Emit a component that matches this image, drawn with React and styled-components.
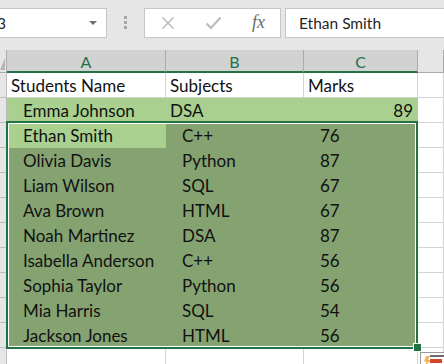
import React from "react";
import styled, { createGlobalStyle } from "styled-components";

const GlobalStyle = createGlobalStyle`
    html, body {
        margin: 0;
        padding: 0;
        background: #ffffff;
        overflow: hidden;
    }
    body {
        font-family: Lato, "Open Sans", sans-serif;
    }
`

const LIGHT = "#a9d08e";
const DARK = "#85a371";

const rows = [
    { name: "Emma Johnson", subject: "DSA", marks: 89, kind: "highlight" },
    { name: "Ethan Smith", subject: "C++", marks: 76, kind: "active" },
    { name: "Olivia Davis", subject: "Python", marks: 87 },
    { name: "Liam Wilson", subject: "SQL", marks: 67 },
    { name: "Ava Brown", subject: "HTML", marks: 67 },
    { name: "Noah Martinez", subject: "DSA", marks: 87 },
    { name: "Isabella Anderson", subject: "C++", marks: 56 },
    { name: "Sophia Taylor", subject: "Python", marks: 56 },
    { name: "Mia Harris", subject: "SQL", marks: 54 },
    { name: "Jackson Jones", subject: "HTML", marks: 56 },
];

const CrossIcon = () => (
    <svg width="14" height="14" viewBox="0 0 14 14">
        <path d="M1.5 1.5 L12.5 12.5 M12.5 1.5 L1.5 12.5" stroke="#bcbcbc" strokeWidth="1.6" fill="none" />
    </svg>
)

const CheckIcon = () => (
    <svg width="17" height="14" viewBox="0 0 17 14">
        <path d="M1.5 7.5 L6 12 L15.5 1.5" stroke="#bcbcbc" strokeWidth="2.2" fill="none" />
    </svg>
)

const QuickIcon = () => (
    <svg width="26" height="16" viewBox="0 0 26 16">
        <rect x="0.5" y="0.5" width="30" height="20" fill="#ffffff" stroke="#9a9a9a" />
        <path d="M6 4 L10 4 L8 8 L11 8 L5 14 L6.5 9.5 L4 9.5 Z" fill="#f0b060" />
        <rect x="10" y="7" width="12" height="4" fill="#d24726" />
        <rect x="10" y="3" width="14" height="2" fill="#6d6d6d" />
    </svg>
)

const App = () => {
    return (
        <Window>
            <GlobalStyle />
            <FormulaBar>
                <NameBox>
                    <NameText>A3</NameText>
                    <DropArrow />
                </NameBox>
                <Grip>
                    <Dot />
                    <Dot />
                    <Dot />
                </Grip>
                <ActionBox>
                    <ActionSlot><CrossIcon /></ActionSlot>
                    <ActionSlot><CheckIcon /></ActionSlot>
                    <FxLabel>fx</FxLabel>
                </ActionBox>
                <FormulaInput>Ethan Smith</FormulaInput>
            </FormulaBar>

            <Sheet>
                <Grid>
                    <Corner><CornerMark /></Corner>
                    <ColHeader $selected>A</ColHeader>
                    <ColHeader $selected>B</ColHeader>
                    <ColHeader $selected>C</ColHeader>
                    <ColHeader />

                    <RowHead />
                    <Cell>Students Name</Cell>
                    <Cell>Subjects</Cell>
                    <Cell>Marks</Cell>
                    <Cell />

                    {rows.map((r) => {
                        const fill = r.kind === "highlight" ? LIGHT : DARK;
                        const nameFill = r.kind ? LIGHT : DARK;
                        const indent = r.kind !== "highlight";
                        return (
                            <React.Fragment key={r.name}>
                                <RowHead />
                                <Cell $fill={nameFill} $indent>{r.name}</Cell>
                                <Cell $fill={fill} $indent={indent}>{r.subject}</Cell>
                                <Cell $fill={fill} $indent={indent} $right={!indent}>{r.marks}</Cell>
                                <Cell />
                            </React.Fragment>
                        )
                    })}

                    <RowHead />
                    <Cell />
                    <Cell />
                    <Cell />
                    <Cell />
                </Grid>

                <Selection />
                <FillHandle />
                <QuickButton><QuickIcon /></QuickButton>
            </Sheet>
        </Window>
    )
}

export default App;

const Window = styled.div`
    width: 444px;
    height: 364px;
    overflow: hidden;
    background: #ffffff;
`

const FormulaBar = styled.div`
    display: flex;
    align-items: flex-start;
    height: 50px;
    box-sizing: border-box;
    padding-top: 8px;
    background: #e6e6e6;
`

const NameBox = styled.div`
    position: relative;
    display: flex;
    align-items: center;
    justify-content: space-between;
    box-sizing: border-box;
    width: 125px;
    height: 30px;
    margin-left: -18px;
    padding: 0 9px 0 4px;
    background: #ffffff;
    border: 1px solid #c6c6c6;
    font-size: 15px;
    color: #1f1f1f;
`

const NameText = styled.span``

const DropArrow = styled.span`
    width: 0;
    height: 0;
    border-left: 4px solid transparent;
    border-right: 4px solid transparent;
    border-top: 4px solid #6f6f6f;
`

const Grip = styled.div`
    display: flex;
    flex-direction: column;
    gap: 2px;
    width: 37px;
    height: 30px;
    box-sizing: border-box;
    padding: 8px 0 0 17px;
`

const Dot = styled.span`
    width: 3px;
    height: 3px;
    background: #a6a6a6;
`

const ActionBox = styled.div`
    display: flex;
    align-items: center;
    box-sizing: border-box;
    width: 137px;
    height: 30px;
    padding-left: 16px;
    background: #ffffff;
    border: 1px solid #c6c6c6;
`

const ActionSlot = styled.span`
    display: flex;
    align-items: center;
    width: 44px;
`

const FxLabel = styled.span`
    font-family: "Liberation Serif", "DejaVu Serif", serif;
    font-style: italic;
    font-size: 18px;
    color: #6b6b6b;
    margin-left: 3px;
    margin-top: -2px;
`

const FormulaInput = styled.div`
    flex: 1;
    display: flex;
    align-items: center;
    box-sizing: border-box;
    height: 30px;
    margin-left: 4px;
    padding-left: 13px;
    background: #ffffff;
    border: 1px solid #c6c6c6;
    border-right: none;
    font-size: 15.5px;
    color: #262626;
`

const Sheet = styled.div`
    position: relative;
`

const Grid = styled.div`
    display: grid;
    grid-template-columns: 7px 159px 138px 114px 1fr;
    grid-auto-rows: 25px;
    grid-template-rows: 23px;
`

const Corner = styled.div`
    position: relative;
    box-sizing: border-box;
    background: #e6e6e6;
    border-bottom: 1px solid #ababab;
    border-right: 1px solid #ababab;
`

const CornerMark = styled.span`
    position: absolute;
    right: 1px;
    bottom: 2px;
    width: 0;
    height: 0;
    border-left: 5px solid transparent;
    border-bottom: 12px solid #b5b5b5;
`

const ColHeader = styled.div`
    display: flex;
    align-items: center;
    justify-content: center;
    box-sizing: border-box;
    padding-top: 1px;
    background: ${(p) => (p.$selected ? "#d2d2d2" : "#e6e6e6")};
    border-right: 1px solid #ababab;
    border-bottom: ${(p) => (p.$selected ? "2px solid #217346" : "1px solid #ababab")};
    color: ${(p) => (p.$selected ? "#217346" : "#444444")};
    font-size: 16px;
`

const RowHead = styled.div`
    box-sizing: border-box;
    background: #e6e6e6;
    border-bottom: 1px solid #bdbdbd;
    border-right: 1px solid #bdbdbd;
`

const Cell = styled.div`
    display: flex;
    align-items: center;
    justify-content: ${(p) => (p.$right ? "flex-end" : "flex-start")};
    box-sizing: border-box;
    padding: 0 4px 0 ${(p) => (p.$indent ? "16px" : "4px")};
    background: ${(p) => p.$fill || "#ffffff"};
    border-right: 1px solid ${(p) => p.$fill || "#d4d4d4"};
    border-bottom: 1px solid ${(p) => p.$fill || "#d4d4d4"};
    font-size: 17px;
    color: #111111;
    white-space: nowrap;
    overflow: hidden;
`

const Selection = styled.div`
    position: absolute;
    left: 6px;
    top: 71px;
    width: 412px;
    height: 228px;
    box-sizing: border-box;
    border: 2px solid #217346;
    box-shadow: inset 0 0 0 1px #ffffff;
    pointer-events: none;
`

const FillHandle = styled.div`
    position: absolute;
    left: 414px;
    top: 294px;
    width: 7px;
    height: 7px;
    box-sizing: border-box;
    background: #217346;
    outline: 1px solid #ffffff;
`

const QuickButton = styled.div`
    position: absolute;
    left: 420px;
    top: 302px;
    line-height: 0;
`
